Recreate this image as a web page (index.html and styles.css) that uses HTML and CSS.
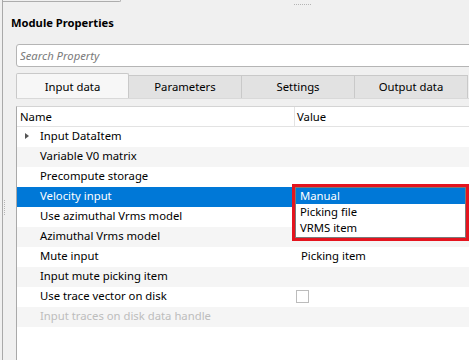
FILE: index.html
```html
<!DOCTYPE html>
<html lang="en">
<head>
    <meta charset="UTF-8">
    <title>Module Properties</title>
    <link rel="stylesheet" href="styles.css">
</head>
<body>
    <div class="panel">
        <div class="prev-box"></div>
        <div class="grip-top"></div>
        <div class="grip-side"></div>

        <h1 class="title">Module Properties</h1>
        <input class="search" type="text" placeholder="Search Property">

        <div class="tabs">
            <div class="tab active">Input data</div>
            <div class="tab">Parameters</div>
            <div class="tab">Settings</div>
            <div class="tab">Output data</div>
        </div>

        <div class="pane">
            <div class="grid">
                <div class="head">
                    <div class="cell name">Name</div>
                    <div class="cell value">Value</div>
                </div>
                <div class="row">
                    <div class="cell name"><span class="arrow"></span>Input DataItem</div>
                    <div class="cell value"></div>
                </div>
                <div class="row alt">
                    <div class="cell name">Variable V0 matrix</div>
                    <div class="cell value"></div>
                </div>
                <div class="row">
                    <div class="cell name">Precompute storage</div>
                    <div class="cell value"></div>
                </div>
                <div class="row selected">
                    <div class="cell name">Velocity input</div>
                    <div class="cell value">
                        <div class="dropdown">
                            <div class="option current">Manual</div>
                            <div class="option">Picking file</div>
                            <div class="option">VRMS item</div>
                        </div>
                    </div>
                </div>
                <div class="row">
                    <div class="cell name">Use azimuthal Vrms model</div>
                    <div class="cell value"></div>
                </div>
                <div class="row alt">
                    <div class="cell name">Azimuthal Vrms model</div>
                    <div class="cell value"></div>
                </div>
                <div class="row">
                    <div class="cell name">Mute input</div>
                    <div class="cell value">Picking item</div>
                </div>
                <div class="row alt">
                    <div class="cell name">Input mute picking item</div>
                    <div class="cell value"></div>
                </div>
                <div class="row">
                    <div class="cell name">Use trace vector on disk</div>
                    <div class="cell value"><span class="check"></span></div>
                </div>
                <div class="row alt disabled">
                    <div class="cell name">Input traces on disk data handle</div>
                    <div class="cell value"></div>
                </div>
            </div>
        </div>
    </div>
</body>
</html>
```

FILE: styles.css
```css
html, body {
    margin: 0;
    padding: 0;
}
body {
    width: 469px;
    height: 360px;
    overflow: hidden;
    background-color: #f0f0f0;
    font-family: "Noto Sans", "Open Sans", sans-serif;
    font-size: 11.3px;
    color: #000;
}
.panel {
    position: relative;
    height: 360px;
    margin-left: 2px;
    border-left: 1px solid #a9a9a9;
}
.prev-box {
    width: 117px;
    height: 1px;
    border-bottom: 1px solid #adadad;
    border-right: 1px solid #adadad;
    border-bottom-right-radius: 2px;
}
.grip-top {
    position: absolute;
    left: 291px;
    top: 4px;
    width: 17px;
    border-top: 1px dotted #b4b4b4;
}
.grip-side {
    position: absolute;
    left: 1px;
    top: 200px;
    height: 15px;
    border-left: 1px dotted #b4b4b4;
}
.title {
    margin: 13px 0 0 8px;
    font-size: 11.2px;
    font-weight: bold;
    line-height: 16px;
    height: 16px;
}
.search {
    display: block;
    box-sizing: border-box;
    margin: 13px 0 0 13px;
    width: 470px;
    height: 23px;
    padding: 0 3px;
    border: 1px solid #b5b5b5;
    border-radius: 3px;
    background: #fff;
    font-family: inherit;
    font-size: 11.3px;
}
.search::placeholder {
    color: #7a7a7a;
    font-style: italic;
}
.tabs {
    display: flex;
    align-items: flex-end;
    margin: 6px 0 0 13px;
    height: 25px;
    border-bottom: 1px solid #d9d9d9;
}
.tab {
    box-sizing: border-box;
    width: 113px;
    height: 23px;
    line-height: 22px;
    text-align: center;
    background-color: #e2e2e2;
    border: 1px solid #c9c9c9;
    border-bottom: none;
    border-left: none;
}
.tab.active {
    height: 25px;
    line-height: 25px;
    background-color: #f7f7f7;
    border-left: 1px solid #c9c9c9;
    border-radius: 2px 2px 0 0;
}
.pane {
    padding: 7px 0 0 13px;
}
.grid {
    border-left: 1px solid #a9a9a9;
    border-top: 1px solid #d4d4d4;
    background-color: #fff;
    height: 260px;
}
.head, .row {
    display: grid;
    grid-template-columns: 278px 1fr;
    height: 20px;
}
.head {
    height: 19px;
    border-bottom: 1px solid #e3e3e3;
}
.head .cell.name {
    border-right: 1px solid #e3e3e3;
    padding-left: 3px;
}
.cell {
    line-height: 19px;
    white-space: nowrap;
}
.row .cell {
    line-height: 18px;
}
.head .cell.value {
    padding-left: 2px;
}
.row .cell.name {
    padding-left: 23px;
    position: relative;
}
.row .cell.value {
    padding-left: 6px;
    position: relative;
}
.row.alt {
    background-color: #f5f5f5;
}
.row.selected {
    background-color: #0078d7;
    color: #fff;
}
.row.disabled {
    color: #bdbdbd;
}
.arrow {
    position: absolute;
    left: 8px;
    top: 6px;
    border-left: 4px solid #555;
    border-top: 3.5px solid transparent;
    border-bottom: 3.5px solid transparent;
}
.check {
    display: inline-block;
    width: 11px;
    height: 11px;
    margin: 3px 0 0 -5px;
    border: 1px solid #bcbcbc;
    background: #fff;
    vertical-align: top;
}
.dropdown {
    position: absolute;
    left: 0;
    top: 0;
    width: 169px;
    height: 49px;
    border: 1px solid #7a7a7a;
    outline: 3px solid #e4141e;
    background-color: #fff;
    color: #000;
    line-height: 16px;
}
.option {
    height: 16px;
    line-height: 16px;
    padding-left: 4px;
}
.option.current {
    background-color: #0078d7;
    color: #fff;
}
```
